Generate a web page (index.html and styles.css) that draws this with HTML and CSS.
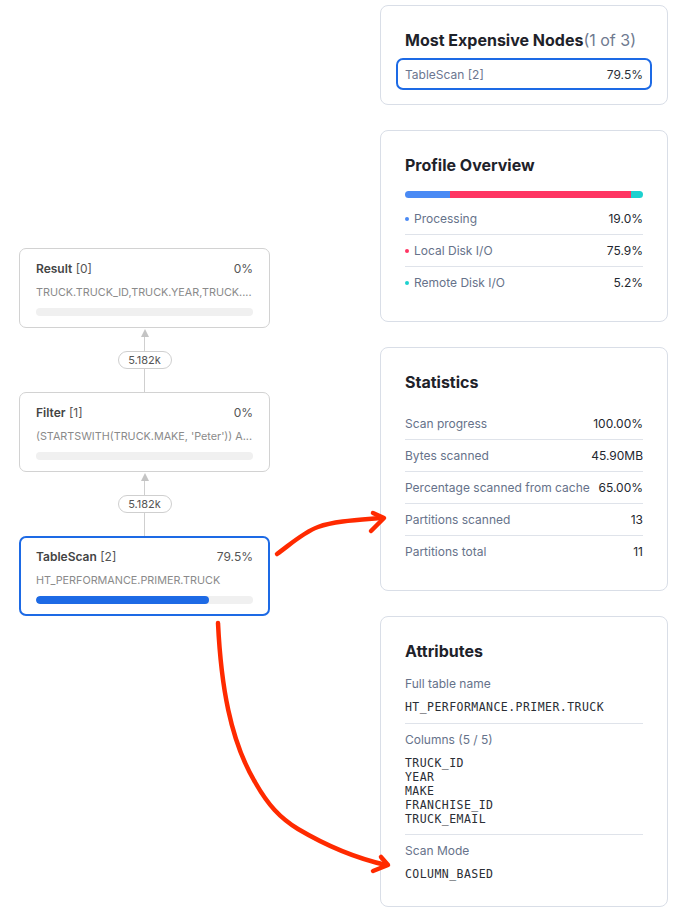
FILE: index.html
```html
<!DOCTYPE html>
<html>
<head>
<meta charset="utf-8">
<link rel="stylesheet" href="styles.css">
</head>
<body>
<div class="page">
  <div class="graph">
    <div class="node">
      <div class="node-head"><span class="node-name"><b>Result</b> [0]</span><span class="node-pct">0%</span></div>
      <div class="node-sub">TRUCK.TRUCK_ID,TRUCK.YEAR,TRUCK....</div>
      <div class="node-bar"></div>
    </div>
    <div class="edge">
      <div class="edge-tip"></div>
      <div class="edge-line short"></div>
      <div class="edge-pill">5.182k</div>
      <div class="edge-line"></div>
    </div>
    <div class="node">
      <div class="node-head"><span class="node-name"><b>Filter</b> [1]</span><span class="node-pct">0%</span></div>
      <div class="node-sub">(STARTSWITH(TRUCK.MAKE, 'Peter')) A...</div>
      <div class="node-bar"></div>
    </div>
    <div class="edge">
      <div class="edge-tip"></div>
      <div class="edge-line short"></div>
      <div class="edge-pill">5.182k</div>
      <div class="edge-line"></div>
    </div>
    <div class="node selected">
      <div class="node-head"><span class="node-name"><b>TableScan</b> [2]</span><span class="node-pct">79.5%</span></div>
      <div class="node-sub">HT_PERFORMANCE.PRIMER.TRUCK</div>
      <div class="node-bar"><div class="node-fill" style="width:79.5%"></div></div>
    </div>
  </div>

  <div class="panels">
    <section class="card card-exp">
      <h2 class="card-title">Most Expensive Nodes<span class="muted">(1 of 3)</span></h2>
      <div class="exp-item"><span class="exp-name">TableScan [2]</span><span class="exp-val">79.5%</span></div>
    </section>

    <section class="card">
      <h2 class="card-title">Profile Overview</h2>
      <div class="stack">
        <div class="seg blue" style="width:19%"></div>
        <div class="seg red" style="width:75.9%"></div>
        <div class="seg teal" style="width:5.1%"></div>
      </div>
      <div class="rows">
        <div class="row"><span class="lbl"><i class="dot blue"></i>Processing</span><span class="val">19.0%</span></div>
        <div class="row"><span class="lbl"><i class="dot red"></i>Local Disk I/O</span><span class="val">75.9%</span></div>
        <div class="row"><span class="lbl"><i class="dot teal"></i>Remote Disk I/O</span><span class="val">5.2%</span></div>
      </div>
    </section>

    <section class="card">
      <h2 class="card-title">Statistics</h2>
      <div class="rows stats">
        <div class="row"><span class="lbl">Scan progress</span><span class="val">100.00%</span></div>
        <div class="row"><span class="lbl">Bytes scanned</span><span class="val">45.90MB</span></div>
        <div class="row"><span class="lbl">Percentage scanned from cache</span><span class="val">65.00%</span></div>
        <div class="row"><span class="lbl">Partitions scanned</span><span class="val">13</span></div>
        <div class="row"><span class="lbl">Partitions total</span><span class="val">11</span></div>
      </div>
    </section>

    <section class="card">
      <h2 class="card-title">Attributes</h2>
      <div class="attrs">
        <div class="attr">
          <div class="lbl">Full table name</div>
          <div class="mono">HT_PERFORMANCE.PRIMER.TRUCK</div>
        </div>
        <div class="attr">
          <div class="lbl">Columns (5 / 5)</div>
          <div class="mono">TRUCK_ID<br>YEAR<br>MAKE<br>FRANCHISE_ID<br>TRUCK_EMAIL</div>
        </div>
        <div class="attr">
          <div class="lbl">Scan Mode</div>
          <div class="mono">COLUMN_BASED</div>
        </div>
      </div>
    </section>
  </div>

  <svg class="annot" width="681" height="918" viewBox="0 0 681 918">
    <g fill="none" stroke="#ff2a00" stroke-width="4.5" stroke-linecap="round" stroke-linejoin="round">
      <path d="M277 554 C 292 543, 304 532, 318 527 C 335 521, 358 520, 382 518"/>
      <path d="M371 531 L384 518 L373 513"/>
      <path d="M218 623 C 221 685, 230 740, 255 782 C 268 805, 280 818, 298 829 C 325 845, 355 858, 386 865"/>
      <path d="M373 871 L388 865 L381 857"/>
    </g>
  </svg>
</div>
</body>
</html>
```

FILE: styles.css
```css
* { box-sizing: border-box; }
html, body { margin: 0; padding: 0; background: #ffffff; }
body { font-family: Inter, "Noto Sans", sans-serif; color: #1f232b; }

.page {
  position: relative;
  width: 681px;
  height: 918px;
  display: grid;
  grid-template-columns: 251px 288px;
  column-gap: 110px;
  padding-left: 19px;
  align-items: start;
}

/* ---------- graph ---------- */
.graph {
  padding-top: 248px;
  display: flex;
  flex-direction: column;
}
.node {
  height: 80px;
  border: 1px solid #d2d2d2;
  border-radius: 7px;
  padding: 12px 16px 11px;
  background: #fff;
}
.node.selected {
  border: 2px solid #1d6ae5;
  padding: 11px 15px 10px;
}
.node-head {
  display: flex;
  justify-content: space-between;
  font-size: 12px;
  line-height: 16px;
  color: #555;
}
.node-name b { font-weight: 600; color: #444; }
.node-pct { color: #555; }
.node-sub {
  margin-top: 9px;
  font-size: 10.8px;
  line-height: 14px;
  color: #8a8a8a;
  white-space: nowrap;
}
.node-bar {
  margin-top: 8px;
  height: 8px;
  border-radius: 4px;
  background: #f0f0f0;
  overflow: hidden;
}
.node-fill { height: 100%; background: #1d6ae5; border-radius: 4px; }

.edge {
  height: 64px;
  display: flex;
  flex-direction: column;
  align-items: center;
}
.edge-tip {
  width: 0; height: 0;
  border-left: 4px solid transparent;
  border-right: 4px solid transparent;
  border-bottom: 8px solid #c4c4c4;
  margin-top: 1px;
}
.edge-line { width: 1px; background: #cfcfcf; flex: 1; }
.edge-line.short { flex: 0 0 14px; }
.edge-pill {
  height: 18px;
  width: 54px;
  border: 1px solid #cfcfcf;
  border-radius: 9px;
  font-size: 11px;
  line-height: 16px;
  text-align: center;
  color: #555;
}

/* ---------- panels ---------- */
.panels {
  padding-top: 5px;
  display: flex;
  flex-direction: column;
  gap: 25px;
}
.card {
  border: 1px solid #d9dee7;
  border-radius: 8px;
  padding: 24px 24px 23px;
  background: #fff;
}
.card-title {
  margin: 0;
  font-size: 16px;
  line-height: 20px;
  font-weight: 700;
  color: #1e222a;
}
.card-title .muted { font-weight: 400; color: #6f7a90; }

.card-exp { padding-bottom: 14px; }
.exp-item {
  margin: 8px -9px 0;
  height: 32px;
  border: 2px solid #1d6ae5;
  border-radius: 7px;
  padding: 0 7px;
  display: flex;
  align-items: center;
  justify-content: space-between;
  font-size: 12px;
}
.exp-name { color: #6b7690; }
.exp-val { color: #2a2f38; }

.stack {
  margin-top: 16px;
  height: 7px;
  border-radius: 4px;
  overflow: hidden;
  display: flex;
}
.seg.blue { background: #4a8af4; }
.seg.red { background: #ff3563; }
.seg.teal { background: #1dd1cf; }

.rows { margin-top: 5px; }
.rows.stats { margin-top: 16px; }
.row {
  height: 32px;
  display: flex;
  align-items: center;
  justify-content: space-between;
  border-bottom: 1px solid #dfe3ea;
  font-size: 12px;
  white-space: nowrap;
}
.row:last-child { border-bottom: 0; height: 31px; }
.lbl { color: #66728a; display: flex; align-items: center; }
.val { color: #23272f; }
.dot {
  width: 4px; height: 4px;
  border-radius: 50%;
  margin-right: 5px;
  display: inline-block;
}
.dot.blue { background: #4a8af4; }
.dot.red { background: #ff3563; }
.dot.teal { background: #1dd1cf; }

.attrs { margin-top: 15px; }
.attr { padding: 8px 0 8px; border-bottom: 1px solid #dfe3ea; }
.attr:first-child { padding-top: 0; padding-bottom: 9px; }
.attr:last-child { border-bottom: 0; padding-top: 8px; padding-bottom: 2px; }
.attr .lbl { font-size: 12px; line-height: 16px; }
.mono {
  margin-top: 8px;
  font-family: "DejaVu Sans Mono", "Liberation Mono", monospace;
  font-size: 11.5px;
  letter-spacing: 0.45px;
  line-height: 14px;
  color: #2a2e35;
}

.annot {
  position: absolute;
  left: 0;
  top: 0;
  pointer-events: none;
}
```
